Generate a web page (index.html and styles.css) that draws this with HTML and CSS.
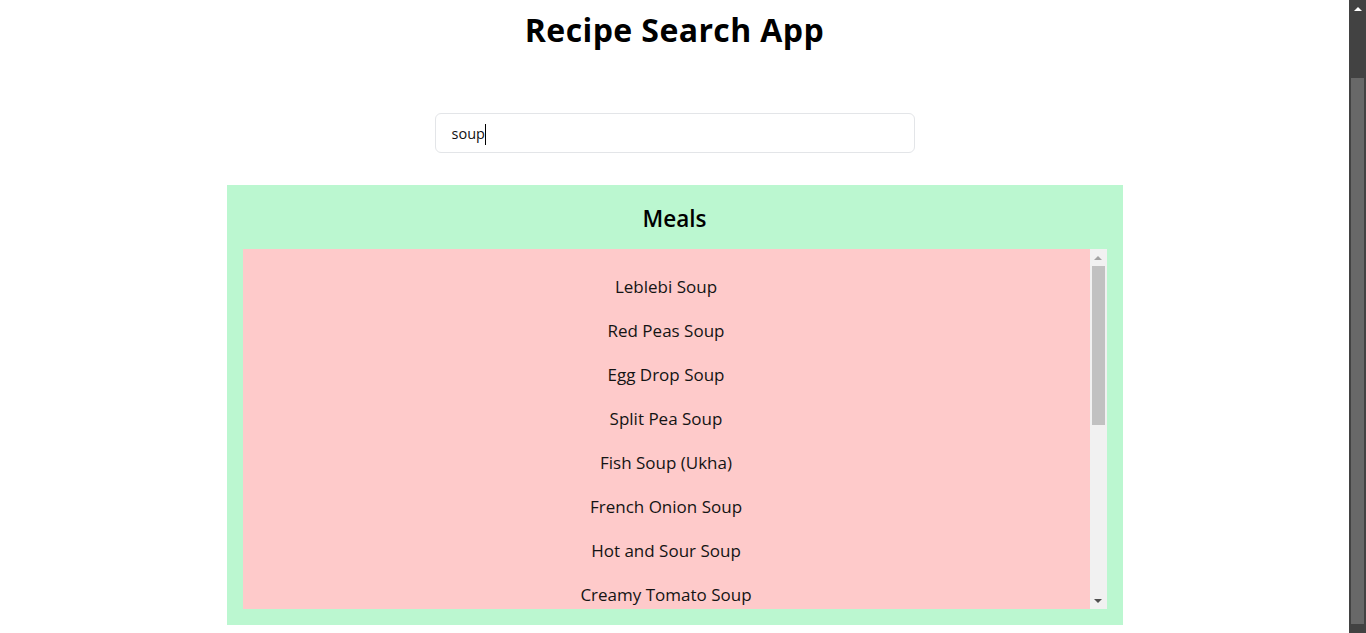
FILE: index.html
```html
<!DOCTYPE html>
<html lang="en">
<head>
<meta charset="utf-8">
<title>Recipe Search App</title>
<link rel="stylesheet" href="styles.css">
</head>
<body>
<main class="app">
  <h1 class="app-title">Recipe Search App</h1>
  <div class="search-box" role="searchbox" aria-label="Search recipes"><span class="search-text">soup</span><span class="caret"></span></div>
  <section class="meals">
    <h2 class="meals-title">Meals</h2>
    <div class="meal-panel">
      <ul class="meal-list">
        <li>Leblebi Soup</li>
        <li>Red Peas Soup</li>
        <li>Egg Drop Soup</li>
        <li>Split Pea Soup</li>
        <li>Fish Soup (Ukha)</li>
        <li>French Onion Soup</li>
        <li>Hot and Sour Soup</li>
        <li>Creamy Tomato Soup</li>
        <li>Snert (Dutch Pea Soup)</li>
        <li>Cabbage Soup (Shchi)</li>
        <li>Broccoli &amp; Stilton soup</li>
        <li>Mushroom soup with buckwheat</li>
        <li>Tunisian Lamb Soup</li>
        <li>Tortilla Soup</li>
        <li>Beetroot Soup (Borscht)</li>
        <li>Chicken Noodle Soup</li>
      </ul>
      <div class="list-scrollbar" aria-hidden="true">
        <div class="sb-button"><span class="arrow-up arrow-light"></span></div>
        <div class="sb-track"><div class="sb-thumb"></div></div>
        <div class="sb-button"><span class="arrow-down arrow-dark"></span></div>
      </div>
    </div>
  </section>
</main>
<div class="page-scrollbar" aria-hidden="true">
  <div class="psb-button"><span class="arrow-up arrow-white"></span></div>
  <div class="psb-thumb"></div>
  <div class="psb-button"><span class="arrow-down arrow-grey"></span></div>
</div>
</body>
</html>
```
FILE: styles.css
```css
html {
  background: #ffffff;
  overflow: hidden;
}

body {
  margin: 0;
  font-family: "Open Sans", "Noto Sans", sans-serif;
  color: #000;
}

.app {
  display: flex;
  flex-direction: column;
  align-items: center;
  margin-right: 17px;
}

.app-title {
  margin: 10px 0 0;
  font-size: 32px;
  line-height: 40px;
  font-weight: 700;
  letter-spacing: 0.4px;
}

.search-box {
  box-sizing: border-box;
  width: 480px;
  height: 40px;
  margin-top: 63px;
  padding: 0 16px;
  border: 1px solid #e3e5e8;
  border-radius: 6px;
  display: flex;
  align-items: center;
  font-size: 14.5px;
  color: #111;
}

.caret {
  display: inline-block;
  width: 1px;
  height: 21px;
  background: #000;
  margin-top: 2px;
}

.meals {
  box-sizing: border-box;
  width: 896px;
  margin-top: 32px;
  padding: 16px;
  background: #bbf7d0;
}

.meals-title {
  margin: 0 0 14px;
  padding-top: 2px;
  text-align: center;
  font-size: 22.5px;
  line-height: 32px;
  font-weight: 600;
}

.meal-panel {
  display: flex;
  height: 360px;
}

.meal-list {
  flex: 1;
  margin: 0;
  padding: 16px;
  list-style: none;
  overflow: hidden;
  background: #fecaca;
}

.meal-list li {
  padding: 8px 0;
  text-align: center;
  font-size: 17px;
  line-height: 28px;
  color: #141414;
}

/* drawn scrollbar of the meal list */
.list-scrollbar {
  width: 17px;
  display: flex;
  flex-direction: column;
  background: #f1f1f1;
}

.sb-button {
  height: 17px;
  display: flex;
  align-items: center;
  justify-content: center;
}

.sb-track {
  flex: 1;
  padding: 0 2px;
}

.sb-thumb {
  height: 159px;
  background: #c1c1c1;
}

/* drawn page scrollbar */
.page-scrollbar {
  position: fixed;
  top: 0;
  right: 0;
  width: 17px;
  height: 100%;
  background: #424242;
  display: flex;
  flex-direction: column;
}

.psb-button {
  height: 17px;
  display: flex;
  align-items: center;
  justify-content: center;
  flex: none;
}

.psb-thumb {
  flex: none;
  height: 546px;
  margin: 61px 2px 8px;
  background: #686868;
}

/* arrow glyphs */
.arrow-up,
.arrow-down {
  width: 0;
  height: 0;
  border-left: 4px solid transparent;
  border-right: 4px solid transparent;
}

.arrow-up {
  border-bottom: 4px solid currentColor;
}

.arrow-down {
  border-top: 4px solid currentColor;
}

.arrow-light { color: #a3a3a3; }
.arrow-dark { color: #505050; }
.arrow-white { color: #ffffff; }
.arrow-grey { color: #9a9a9a; }
```
